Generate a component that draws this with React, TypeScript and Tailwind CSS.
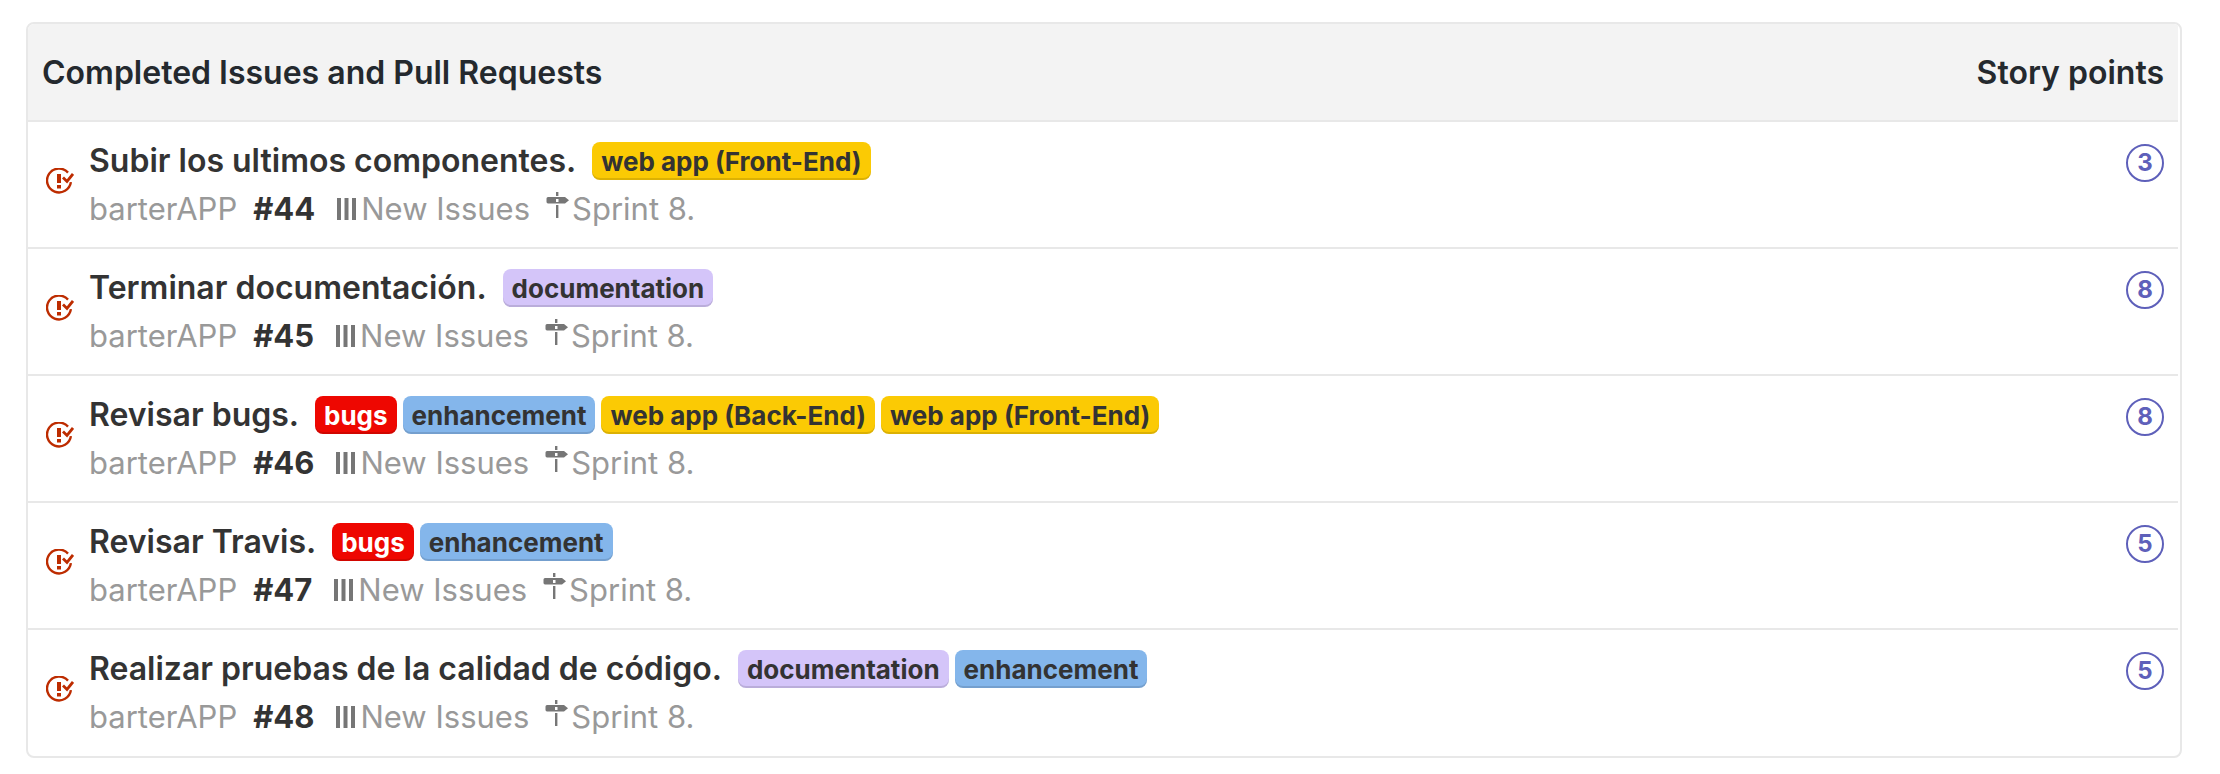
type LabelKind = "web" | "docs" | "bugs" | "enhancement";

interface Label {
  text: string;
  kind: LabelKind;
}

interface Issue {
  number: number;
  title: string;
  labels: Label[];
  points: number;
}

const labelStyles: Record<LabelKind, string> = {
  web: "bg-[#fbca04] text-[#333333]",
  docs: "bg-[#d4c5f9] text-[#333333]",
  bugs: "bg-[#ee0701] text-white",
  enhancement: "bg-[#84b6eb] text-[#333333]",
};

const frontEnd: Label = { text: "web app (Front-End)", kind: "web" };
const backEnd: Label = { text: "web app (Back-End)", kind: "web" };
const documentation: Label = { text: "documentation", kind: "docs" };
const bugs: Label = { text: "bugs", kind: "bugs" };
const enhancement: Label = { text: "enhancement", kind: "enhancement" };

const issues: Issue[] = [
  { number: 44, title: "Subir los ultimos componentes.", labels: [frontEnd], points: 3 },
  { number: 45, title: "Terminar documentación.", labels: [documentation], points: 8 },
  { number: 46, title: "Revisar bugs.", labels: [bugs, enhancement, backEnd, frontEnd], points: 8 },
  { number: 47, title: "Revisar Travis.", labels: [bugs, enhancement], points: 5 },
  {
    number: 48,
    title: "Realizar pruebas de la calidad de código.",
    labels: [documentation, enhancement],
    points: 5,
  },
];

function ClosedIssueIcon() {
  return (
    <svg viewBox="0 0 28 26" className="h-[26px] w-7 shrink-0" fill="none" aria-hidden="true">
      <path
        d="M22 4.6A12 11.9 0 1 0 24.900 14.200"
        stroke="#bd2c00"
        strokeWidth="2.4"
      />
      <path d="M11 6h4v9h-4zM11 17h4v3.4h-4z" fill="#bd2c00" />
      <path d="M17 9.400l4 4 6-7.400" stroke="#bd2c00" strokeWidth="2.800" />
    </svg>
  );
}

function PipelineIcon() {
  return (
    <svg viewBox="0 0 20 22" className="h-[22px] w-5 shrink-0" fill="#767676" aria-hidden="true">
      <path d="M0 0h4v22H0zM7.500 0h4v22h-4zM15 0h4v22h-4z" />
    </svg>
  );
}

function MilestoneIcon() {
  return (
    <svg viewBox="0 0 24 26" className="mb-2 h-[26px] w-6 shrink-0" fill="#767676" aria-hidden="true">
      <path d="M10 0h2.400v4h-2.400zM10 13h2.400v13h-2.400z" />
      <path
        fillRule="evenodd"
        d="M2 5h17l4 3.2-4 3.3H2A1.6 1.6 0 0 1 .5 10V6.500A1.600 1.600 0 0 1 2 5zM10 7v3h2.500V7z"
      />
    </svg>
  );
}

function IssueRow({ issue }: { issue: Issue }) {
  return (
    <tr className="border-t-2 border-[#e8e8e8]">
      <td className="px-[18px] py-0">
        <div className="flex h-[125px] items-start gap-[15px]">
          <div className="pt-[46px]">
            <ClosedIssueIcon />
          </div>
          <div className="pt-[15px]">
            <div className="flex items-center">
              <a href="#issue" className="mr-4 text-[32px] leading-[48px] font-semibold text-[#333333]">
                {issue.title}
              </a>
              <div className="flex gap-[6px]">
                {issue.labels.map((label) => (
                  <span
                    key={label.text}
                    className={`h-[38px] rounded-lg px-[9px] text-[26px] leading-[40px] font-bold shadow-[inset_0_-2px_0_rgba(0,0,0,0.12)] ${labelStyles[label.kind]}`}
                  >
                    {label.text}
                  </span>
                ))}
              </div>
            </div>
            <div className="flex items-center leading-[48px] text-[#999999]">
              <span className="mr-4">barterAPP</span>
              <span className="mr-[22px] font-bold text-[#333333]">#{issue.number}</span>
              <PipelineIcon />
              <span className="mr-4 ml-1">New Issues</span>
              <MilestoneIcon />
              <span className="ml-0.5">Sprint 8.</span>
            </div>
          </div>
        </div>
      </td>
      <td className="px-[14px] pt-[22px] align-top">
        <div className="ml-auto flex size-[38px] items-center justify-center rounded-full border-2 border-[#5e60ba] text-2xl font-bold text-[#5e60ba]">
          {issue.points}
        </div>
      </td>
    </tr>
  );
}

export default function App() {
  return (
    <main className="bg-white pt-[22px] pr-[38px] pb-4 pl-[26px] font-['Inter','Liberation_Sans',sans-serif] text-[31px] whitespace-nowrap">
      <div className="overflow-hidden rounded-lg border-2 border-[#e8e8e8] pr-[2px] pb-px">
        <table className="w-full border-collapse">
          <thead>
            <tr className="h-[97px] bg-[#f3f3f3] text-[32px] text-[#24292e]">
              <th scope="col" className="pt-0.5 pl-[14px] text-left font-semibold">
                Completed Issues and Pull Requests
              </th>
              <th scope="col" className="pt-0.5 pr-[14px] text-right font-semibold">
                Story points
              </th>
            </tr>
          </thead>
          <tbody>
            {issues.map((issue) => (
              <IssueRow key={issue.number} issue={issue} />
            ))}
          </tbody>
        </table>
      </div>
    </main>
  );
}
